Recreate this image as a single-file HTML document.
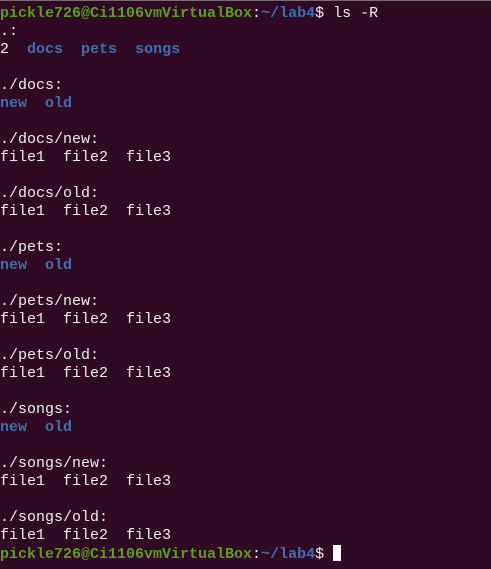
<!DOCTYPE html>
<html><head><style>
html,body{margin:0;padding:0;background:#300a24;}
body{width:491px;height:569px;overflow:hidden;border-top:1px solid #7a6a74;box-sizing:border-box;}
pre{margin:0;padding:4px 0 0 0;font-family:"Liberation Mono",monospace;font-size:15px;line-height:18px;color:#eeeeec;}
.g{color:#5a9e1e;font-weight:bold}
.b{color:#3f6eb0;font-weight:bold}
.c{display:inline-block;width:8px;height:16px;background:#fff;vertical-align:-3px}
</style></head><body><pre><span class="g">pickle726@Ci1106vmVirtualBox</span>:<span class="b">~/lab4</span>$ ls -R
.:
2  <span class="b">docs</span>  <span class="b">pets</span>  <span class="b">songs</span>

./docs:
<span class="b">new</span>  <span class="b">old</span>

./docs/new:
file1  file2  file3

./docs/old:
file1  file2  file3

./pets:
<span class="b">new</span>  <span class="b">old</span>

./pets/new:
file1  file2  file3

./pets/old:
file1  file2  file3

./songs:
<span class="b">new</span>  <span class="b">old</span>

./songs/new:
file1  file2  file3

./songs/old:
file1  file2  file3
<span class="g">pickle726@Ci1106vmVirtualBox</span>:<span class="b">~/lab4</span>$ <span class="c"></span></pre></body></html>
